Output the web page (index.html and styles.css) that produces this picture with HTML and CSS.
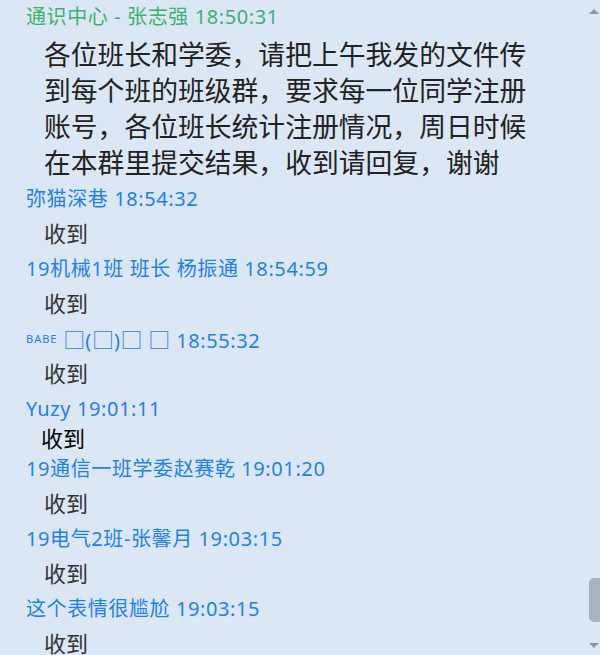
FILE: index.html
```html
<!DOCTYPE html>
<html lang="zh-CN">
<head>
<meta charset="utf-8">
<title>聊天记录</title>
<link rel="stylesheet" href="styles.css">
</head>
<body>
<div class="chat">
  <div class="head green first">通识中心 - 张志强 18:50:31</div>
  <div class="body">各位班长和学委，请把上午我发的文件传<br>到每个班的班级群，要求每一位同学注册<br>账号，各位班长统计注册情况，周日时候<br>在本群里提交结果，收到请回复，谢谢</div>

  <div class="head">弥猫深巷 18:54:32</div>
  <div class="msg">收到</div>

  <div class="head">19机械1班 班长 杨振通 18:54:59</div>
  <div class="msg">收到</div>

  <div class="head"><span class="tag">BABE</span> <span class="tofu">□</span>(<span class="tofu">□</span>)<span class="tofu">□</span> <span class="tofu">□</span> 18:55:32</div>
  <div class="msg">收到</div>

  <div class="head">Yuzy 19:01:11</div>
  <div class="msg dark">收到</div>

  <div class="head">19通信一班学委赵赛乾 19:01:20</div>
  <div class="msg">收到</div>

  <div class="head">19电气2班-张馨月 19:03:15</div>
  <div class="msg">收到</div>

  <div class="head">这个表情很尴尬 19:03:15</div>
  <div class="msg">收到</div>
</div>
<div class="scrollbar">
  <div class="arrow up"></div>
  <div class="thumb"></div>
  <div class="arrow down"></div>
</div>
</body>
</html>
```
FILE: styles.css
```css
html, body {
  margin: 0;
  padding: 0;
}
body {
  width: 600px;
  height: 655px;
  overflow: hidden;
  background: #dce7f5;
  font-family: "Noto Sans", "Noto Sans CJK SC", sans-serif;
  position: relative;
}
.chat {
  display: flex;
  flex-direction: column;
}
.head {
  height: 35px;
  line-height: 35px;
  padding-left: 26px;
  font-size: 20px;
  letter-spacing: 0.6px;
  color: #1f80ea;
  white-space: nowrap;
}
.head.green {
  color: #3fb16e;
}
.head.first {
  height: 34px;
  line-height: 34px;
}
.body {
  margin-top: 3px;
  padding-left: 44px;
  font-size: 26.8px;
  line-height: 36px;
  color: #222;
  white-space: nowrap;
}
.msg {
  height: 35px;
  line-height: 35px;
  padding-left: 44px;
  font-size: 22px;
  color: #333;
}
.msg.dark {
  height: 25px;
  line-height: 25px;
  padding-left: 41px;
  color: #000;
}
.tag {
  font-size: 11px;
  letter-spacing: 1px;
  vertical-align: 5px;
}
.tofu {
  font-family: "Noto Sans CJK SC", sans-serif;
  font-size: 22px;
  letter-spacing: 0;
}
.scrollbar {
  position: absolute;
  top: 0;
  right: 0;
  width: 12px;
  height: 655px;
}
.arrow {
  position: absolute;
  right: 1px;
  width: 0;
  height: 0;
  border-left: 5px solid transparent;
  border-right: 5px solid transparent;
}
.arrow.up {
  top: 9px;
  border-bottom: 5px solid #8c97a6;
}
.arrow.down {
  top: 643px;
  border-top: 5px solid #8c97a6;
}
.thumb {
  position: absolute;
  top: 578px;
  left: 1px;
  width: 14px;
  height: 44px;
  border-radius: 5px;
  background: #a9b3c0;
}
```
